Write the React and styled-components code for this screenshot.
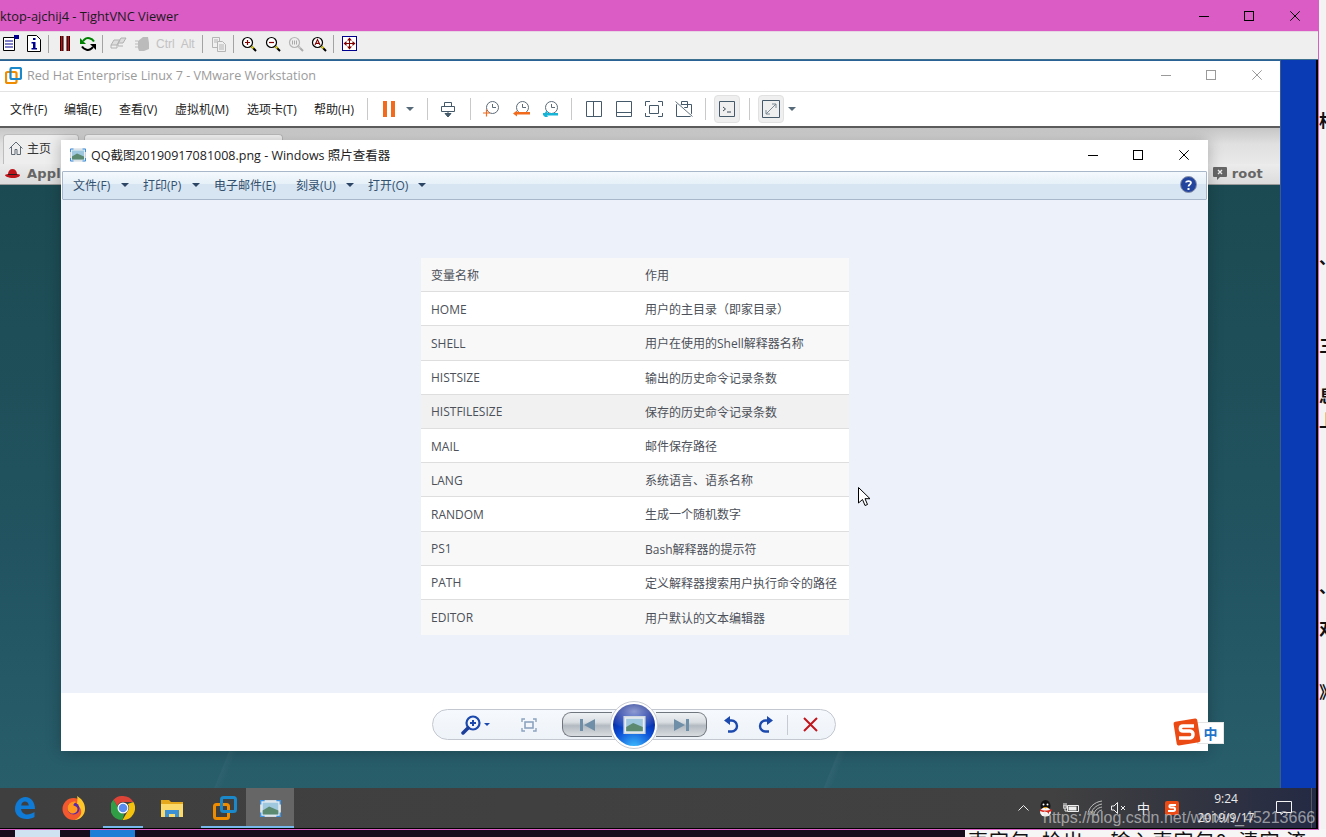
import React from 'react';
import styled, { createGlobalStyle, css } from 'styled-components';

const Global = createGlobalStyle`
  html, body { margin: 0; padding: 0; background: #fff; }
  body { font-family: "Open Sans", "Noto Sans CJK SC", sans-serif; }
  * { box-sizing: border-box; }
`;

const UI = `"Open Sans", "Noto Sans CJK SC", sans-serif`;

const Stage = styled.div`
  position: relative;
  width: 1326px;
  height: 837px;
  overflow: hidden;
  background: #f3f3f3;
`;

const Ico = styled.svg`
  display: block;
  flex-shrink: 0;
  margin-left: ${p => p.$ml || 0}px;
`;

/* ---------- page behind the VNC window ---------- */
const BottomStrip = styled.div`
  position: absolute;
  left: 0;
  right: 0;
  top: 829px;
  height: 8px;
  display: flex;
  background: #170c1c;
  overflow: hidden;
`;
const StripIcon = styled.div`
  width: 45px;
  height: 8px;
  margin-left: ${p => p.$ml}px;
  background: ${p => p.$c};
  flex-shrink: 0;
`;
const DocLine = styled.div`
  margin-left: auto;
  width: 361px;
  height: 8px;
  padding-left: 3px;
  background: #f6f6f6;
  color: #111;
  font: 20px/24px "Noto Sans CJK SC", serif;
  letter-spacing: 1px;
  white-space: pre;
  overflow: hidden;
`;
const DocGlyph = styled.span`
  position: absolute;
  left: 1319px;
  top: ${p => p.$y}px;
  color: #111;
  font: 700 17px/20px "Noto Sans CJK SC", serif;
`;

/* ---------- VNC window ---------- */
const VncWindow = styled.div`
  position: absolute;
  left: 0;
  top: 0;
  width: 1319px;
  height: 830px;
  display: flex;
  flex-direction: column;
  border-right: 1px solid #d95dc4;
  border-bottom: 1px solid #d95dc4;
`;
const VncTitle = styled.header`
  height: 32px;
  flex-shrink: 0;
  display: flex;
  align-items: center;
  background: #db5cc5;
  border-bottom: 1px solid #e6d5e2;
  padding-right: 18px;
  color: #1a1a1a;
  font: 12.8px "Open Sans", sans-serif;
  white-space: nowrap;
`;
const VncToolbar = styled.div`
  height: 28px;
  flex-shrink: 0;
  display: flex;
  align-items: center;
  background: #efefef;
  border-bottom: 1px solid #3d6f8e;
  padding: 0 0 4px 2px;
`;
const VSep = styled.span`
  flex-shrink: 0;
  width: 1px;
  height: ${p => p.$h || 18}px;
  margin-left: ${p => p.$ml || 0}px;
  background: ${p => p.$c || '#a3a3a3'};
`;
const KeyLabel = styled.span`
  flex-shrink: 0;
  margin-left: ${p => p.$ml}px;
  color: #c2c2c2;
  font: 12px "Liberation Sans", sans-serif;
`;
const Controls = styled.div`
  margin-left: auto;
  display: flex;
  align-items: center;
`;
const RemoteRow = styled.div`
  flex: 1;
  min-height: 0;
  display: flex;
`;
const BlueStrip = styled.div`
  flex: 1;
  background: #0a3ab4;
  border-left: 1px solid #3d5a8f;
  border-right: 2px solid #000;
`;

/* ---------- VMware window ---------- */
const VmwareWindow = styled.div`
  width: 1280px;
  flex-shrink: 0;
  display: flex;
  flex-direction: column;
  background: #fff;
`;
const VmTitle = styled.div`
  height: 32px;
  flex-shrink: 0;
  display: flex;
  align-items: center;
  padding: 0 18px 2px 5px;
  border-top: 1px solid #2b6295;
  border-bottom: 1px solid #e3e3e3;
  color: #9b9b9b;
  font: 12.6px "Open Sans", sans-serif;
`;
const VmName = styled.span`
  margin-left: 5px;
`;
const VmMenuBar = styled.div`
  height: 36px;
  flex-shrink: 0;
  display: flex;
  align-items: center;
  background: #fff;
  border-bottom: 2px solid #5c5c5c;
`;
const VmMenuItem = styled.span`
  flex-shrink: 0;
  width: ${p => p.$w}px;
  margin-left: ${p => p.$ml || 0}px;
  color: #222;
  font: 12px ${UI};
  white-space: nowrap;
`;
const ToggleBox = styled.span`
  flex-shrink: 0;
  margin-left: ${p => p.$ml}px;
  width: ${p => p.$w}px;
  height: 28px;
  display: flex;
  align-items: center;
  justify-content: center;
  background: #efefef;
  border: 1px solid #e1e1e1;
  border-radius: 4px;
`;
const TabZone = styled.div`
  height: 36px;
  flex-shrink: 0;
  display: flex;
  align-items: flex-end;
  padding-left: 3px;
  gap: 5px;
  background: linear-gradient(#c6c6c6, #e0e0e0 45%, #e9e9e9);
`;
const Tab = styled.div`
  width: ${p => p.$w}px;
  height: 30px;
  display: flex;
  align-items: center;
  gap: 4px;
  padding: 0 0 3px 5px;
  background: ${p => (p.$light ? '#f7f7f7' : '#eeeeee')};
  border: 1px solid #bdbdbd;
  border-bottom: 0;
  border-radius: 4px 4px 0 0;
  color: #333;
  font: 12px ${UI};
`;
const GnomePanel = styled.div`
  height: 21px;
  flex-shrink: 0;
  display: flex;
  align-items: center;
  padding: 0 17px 2px 5px;
  background: linear-gradient(#ececec, #dcdcdc);
  border-bottom: 1px solid #9a9a9a;
  color: #666;
  font: 700 13px "DejaVu Sans", sans-serif;
  letter-spacing: 0.2px;
`;
const PanelLabel = styled.span`
  margin-left: ${p => p.$ml}px;
`;
const PanelRight = styled.div`
  margin-left: auto;
  display: flex;
  align-items: center;
  gap: 5px;
`;
const Desktop = styled.div`
  flex: 1;
  background:
    linear-gradient(112deg, transparent 70%, rgba(255,255,255,.04) 70.1%, transparent 70.6%),
    linear-gradient(112deg, transparent 30%, rgba(255,255,255,.03) 30.1%, transparent 30.6%),
    linear-gradient(#1c4a52, #215460 60%, #285d6a);
`;

/* ---------- Taskbar ---------- */
const Taskbar = styled.footer`
  height: 41px;
  flex-shrink: 0;
  display: flex;
  align-items: stretch;
  background: linear-gradient(90deg, #3f3f3f 0, #414141 80%, #333540 90%, #242a44 100%);
  border-bottom: 1px solid #000;
  border-right: 2px solid #000;
`;
const TaskCell = styled.div`
  width: ${p => p.$w}px;
  margin-left: ${p => p.$ml || 0}px;
  flex-shrink: 0;
  display: flex;
  align-items: center;
  justify-content: center;
  background: ${p => (p.$active ? '#666666' : 'transparent')};
  ${p => p.$line && css`box-shadow: inset 0 -2px 0 #76b9ed;`}
`;
const TrayArea = styled.div`
  margin-left: auto;
  display: flex;
  align-items: center;
  color: #f0f0f0;
`;
const TrayText = styled.span`
  flex-shrink: 0;
  margin-left: ${p => p.$ml}px;
  color: #f4f4f4;
  font: 13px/16px "Noto Sans CJK SC", sans-serif;
`;
const Clock = styled.div`
  margin-left: 10px;
  width: 74px;
  text-align: center;
  font: 12px/19px "Open Sans", sans-serif;
  color: #eaeaea;
`;
const ShowDesk = styled.span`
  width: 1px;
  height: 40px;
  margin-left: 19px;
  margin-right: 4px;
  background: #565860;
`;
const Watermark = styled.div`
  position: absolute;
  left: 1043px;
  top: 808px;
  color: rgba(225, 225, 225, .62);
  font: 16px/20px "Liberation Sans", sans-serif;
  white-space: nowrap;
`;

/* ---------- Photo viewer ---------- */
const PhotoWindow = styled.section`
  position: absolute;
  left: 61px;
  top: 140px;
  width: 1147px;
  height: 611px;
  display: flex;
  flex-direction: column;
  background: #fff;
  box-shadow: 0 0 14px rgba(0, 0, 0, .25);
`;
const PhotoTitle = styled.div`
  height: 31px;
  flex-shrink: 0;
  display: flex;
  align-items: center;
  padding: 0 19px 2px 9px;
  color: #222;
  font: 12.5px ${UI};
  white-space: nowrap;
`;
const PhotoName = styled.span`
  margin-left: 5px;
`;
const PhotoMenu = styled.nav`
  height: 29px;
  margin: 0 1px;
  flex-shrink: 0;
  display: flex;
  align-items: center;
  padding-bottom: 2px;
  border: 1px solid #a9b7ca;
  border-radius: 1px;
  background: linear-gradient(#f4f9fd 0, #e6f0f8 45%, #d7e5f2 46%, #d7e5f2 100%);
`;
const PhotoMenuItem = styled.span`
  flex-shrink: 0;
  margin-left: ${p => p.$ml}px;
  width: ${p => p.$w}px;
  color: #33506f;
  font: 12px ${UI};
  white-space: nowrap;
`;
const Caret = styled.span`
  flex-shrink: 0;
  width: 0;
  height: 0;
  margin-left: ${p => p.$ml || 0}px;
  border-left: ${p => p.$s || 4}px solid transparent;
  border-right: ${p => p.$s || 4}px solid transparent;
  border-top: ${p => p.$s || 4}px solid ${p => p.$c || '#2c4565'};
`;
const HelpWrap = styled.span`
  margin-right: 9px;
`;
const PhotoBody = styled.div`
  flex: 1;
  min-height: 0;
  background: #edf2fa;
  padding: 58px 0 0 360px;
`;
const Table = styled.div`
  width: 428px;
  color: #4c5058;
  font: 12px ${UI};
`;
const Row = styled.div`
  display: grid;
  grid-template-columns: 214px 1fr;
  align-items: center;
  height: ${p => (p.$last ? 35 : 34.2)}px;
  padding: 1px 0 0 10px;
  background: ${p => p.$bg};
  border-bottom: ${p => (p.$last ? 0 : '1px solid #dedede')};
`;
const PhotoFooter = styled.div`
  height: 58px;
  flex-shrink: 0;
  background: #fff;
  padding: 16px 0 0 371px;
`;
const Pill = styled.div`
  width: 404px;
  height: 31px;
  display: flex;
  align-items: center;
  border: 1px solid #c3c8d0;
  border-radius: 16px;
  background: linear-gradient(#f6f9fd, #eef3f9);
`;
const NavHalf = styled.div`
  flex-shrink: 0;
  margin-left: ${p => p.$ml || 0}px;
  width: ${p => p.$w}px;
  height: 25px;
  display: flex;
  align-items: center;
  justify-content: center;
  background: linear-gradient(#eef1f4 0, #d9dee2 40%, #b3bac1 55%, #d8dce0 100%);
  border: 1px solid #70767d;
  border-radius: ${p => (p.$left ? '9px 0 0 9px' : '0 9px 9px 0')};
  ${p => (p.$left ? 'border-right: 0;' : 'border-left: 0;')}
`;
const Orb = styled.div`
  flex-shrink: 0;
  width: 48px;
  height: 48px;
  margin: 0 -2px;
  position: relative;
  z-index: 1;
  display: flex;
  align-items: center;
  justify-content: center;
  border-radius: 50%;
  border: 1px solid #c8ccd2;
  padding: 2px;
  background: #fff;
`;
const OrbCore = styled.div`
  width: 100%;
  height: 100%;
  display: flex;
  align-items: center;
  justify-content: center;
  border-radius: 50%;
  background:
    radial-gradient(ellipse 70% 42% at 50% 18%, rgba(255,255,255,.55), rgba(255,255,255,.08) 90%, transparent 100%),
    radial-gradient(circle at 50% 105%, #3fc0ff 0, #0b4fd6 42%, #05229c 72%, #0a1f7c 100%);
`;
const Ime = styled.div`
  position: absolute;
  left: 1173px;
  top: 718px;
  width: 51px;
  height: 28px;
  display: flex;
  align-items: center;
`;
const ImeLogo = styled(Ico)`
  position: relative;
  z-index: 1;
`;
const ImeTag = styled.span`
  position: absolute;
  left: 24px;
  top: 4px;
  width: 27px;
  height: 22px;
  display: flex;
  align-items: center;
  justify-content: center;
  background: #fff;
  border: 1px solid #e5e5e5;
  color: #1f74c9;
  font: 700 14px "Noto Sans CJK SC", sans-serif;
`;
const Cursor = styled.svg`
  position: absolute;
  left: 858px;
  top: 487px;
`;
const ThumbSvg = styled.svg`
  display: block;
`;

const rows = [
  ['HOME', '用户的主目录（即家目录）', '#fff'],
  ['SHELL', '用户在使用的Shell解释器名称', '#f8f8f8'],
  ['HISTSIZE', '输出的历史命令记录条数', '#fff'],
  ['HISTFILESIZE', '保存的历史命令记录条数', '#f1f1f1'],
  ['MAIL', '邮件保存路径', '#fff'],
  ['LANG', '系统语言、语系名称', '#f8f8f8'],
  ['RANDOM', '生成一个随机数字', '#fff'],
  ['PS1', 'Bash解释器的提示符', '#f8f8f8'],
  ['PATH', '定义解释器搜索用户执行命令的路径', '#fff'],
  ['EDITOR', '用户默认的文本编辑器', '#f8f8f8'],
];

/* ---------- drawn icons ---------- */
const Min = ({ c, ml }) => (
  <Ico $ml={ml} width="10" height="10" viewBox="0 0 10 10"><path d="M0 5.500H10" stroke={c} /></Ico>
);
const Max = ({ c, ml }) => (
  <Ico $ml={ml} width="10" height="10" viewBox="0 0 10 10"><rect x=".5" y=".5" width="9" height="9" fill="none" stroke={c} /></Ico>
);
const Close = ({ c, ml }) => (
  <Ico $ml={ml} width="10" height="10" viewBox="0 0 10 10"><path d="M.3.3 9.700 9.700M9.700.3.3 9.700" stroke={c} /></Ico>
);
const WinControls = ({ c, g1, g2 }) => (
  <Controls><Min c={c} /><Max c={c} ml={g1} /><Close c={c} ml={g2} /></Controls>
);

const Lens = ({ ml, dim, glyph }) => {
  const c = dim ? '#b5b5b5' : '#000';
  const g = dim ? '#aaa' : '#800000';
  return (
    <Ico $ml={ml} width="16" height="16" viewBox="0 0 16 16">
      <circle cx="6.500" cy="6.500" r="5" fill={dim ? '#eee' : '#fff'} stroke={c} strokeWidth="1.200" />
      <path d="M10 10l5 5" stroke={dim ? '#aaa' : '#000'} strokeWidth="2" />
      <path d="M10.400 10.400l2 2" stroke={dim ? '#ccc' : '#f3e312'} strokeWidth="1.600" />
      {glyph === 'plus' && <path d="M4 6.500H9M6.500 4V9" stroke={g} strokeWidth="1.200" />}
      {glyph === 'minus' && <path d="M4 6.500H9" stroke={g} strokeWidth="1.200" />}
      {glyph === 'fit' && <path d="M4.500 4.500v4M6.500 4.500v4M8.500 4.500v4" stroke={g} strokeWidth="1" />}
      {glyph === 'auto' && <path d="M4 9 6.500 3.500 9 9M5 7.400H8" fill="none" stroke={g} strokeWidth="1.100" />}
    </Ico>
  );
};

const ClockBase = ({ children, ml }) => (
  <Ico $ml={ml} width="17" height="16" viewBox="0 0 17 16">
    <circle cx="9.500" cy="6.500" r="6" fill="none" stroke="#5b6b78" />
    <path d="M9.500 3v3.500H13" fill="none" stroke="#5b6b78" />
    {children}
  </Ico>
);

const Panel = ({ ml, children, w = 16 }) => (
  <Ico $ml={ml} width={w} height="16" viewBox={`0 0 ${w} 16`} fill="none" stroke="#44596a">{children}</Ico>
);

const VmLogo = ({ s = 17 }) => (
  <Ico width={s} height={s} viewBox="0 0 17 17" fill="none">
    <rect x="1" y="5" width="10.500" height="11" rx="1.500" stroke="#f08c00" strokeWidth="2.200" />
    <rect x="5.500" y="1" width="10.500" height="11" rx="1.500" stroke="#1a88c9" strokeWidth="2.200" />
  </Ico>
);

const PhotoThumb = ({ w = 16, h = 13, corners }) => (
  <ThumbSvg width={w} height={h} viewBox="0 0 16 13">
    <rect x=".5" y=".5" width="15" height="12" fill="#e8eef2" stroke="#cfd8de" />
    <rect x="2" y="2" width="12" height="9" fill="#9fc7de" />
    <path d="M2 8 7 5l7 3v3H2z" fill="#5b8a70" />
    {corners && <path d="M.5 3.500v-3h3M12.500.5h3v3M15.500 9.500v3h-3M3.500 12.500h-3v-3" fill="none" stroke="#3c90e0" />}
  </ThumbSvg>
);

export default function App() {
  return (
    <Stage>
      <Global />
      <BottomStrip>
        <StripIcon $ml={15} $c="#cfe2f2" />
        <StripIcon $ml={30} $c="#1f7fd6" />
        <DocLine>{'声字包  检出。 输入声字包0  清空 流'}</DocLine>
      </BottomStrip>
      <DocGlyph $y={110}>相</DocGlyph>
      <DocGlyph $y={247}>、</DocGlyph>
      <DocGlyph $y={335}>三</DocGlyph>
      <DocGlyph $y={385}>息</DocGlyph>
      <DocGlyph $y={410}>上</DocGlyph>
      <DocGlyph $y={576}>、</DocGlyph>
      <DocGlyph $y={618}>对</DocGlyph>
      <DocGlyph $y={682}>》</DocGlyph>

      <VncWindow>
        <VncTitle>
          ktop-ajchij4 - TightVNC Viewer
          <WinControls c="#000" g1={35} g2={36} />
        </VncTitle>
        <VncToolbar>
          <Ico width="17" height="17" viewBox="0 0 17 17">
            <path d="M1.500 2.500h11v13h-11z" fill="#fff" stroke="#000" />
            <path d="M3 6h8M3 9h8M3 12h8" stroke="#000090" />
            <rect x="12" y="0" width="5" height="4" fill="#000090" />
          </Ico>
          <Ico $ml={7} width="16" height="17" viewBox="0 0 16 17">
            <path d="M1.500.5h9l4 4v12h-13z" fill="#fff" stroke="#000" />
            <path d="M7 3h2.500v2H7zM5.500 7h4v6h1.500v1.500H5.500V13H7V8.500H5.500z" fill="#000090" />
          </Ico>
          <VSep $ml={6} />
          <Ico $ml={11} width="10" height="15" viewBox="0 0 10 15">
            <path d="M0 0h3.500v15H0zM6.500 0H10v15H6.500z" fill="#000" />
            <path d="M1 0h1.500v15H1zM7.500 0H9v15H7.500z" fill="#e00000" />
          </Ico>
          <Ico $ml={10} width="16" height="16" viewBox="0 0 16 16" fill="none">
            <path d="M14 5.500C12 2 7 1 4.500 3.500L3 5" stroke="#008000" strokeWidth="2" />
            <path d="M0 2v6h6z" fill="#008000" />
            <path d="M2 10.500C4 14 9 15 11.500 12.500L13 11" stroke="#000" strokeWidth="2" />
            <path d="M16 14V8h-6z" fill="#000" />
          </Ico>
          <VSep $ml={6} />
          <Ico $ml={7} width="17" height="13" viewBox="0 0 17 13" fill="#ddd" stroke="#b0b0b0">
            <path d="M1 8 4 3h6L7 8zM8 6l3-5h5l-3 5z" />
            <path d="M1 8v3h6V8M8 6v3h5" fill="none" />
          </Ico>
          <Ico $ml={8} width="15" height="16" viewBox="0 0 15 16" fill="#bbb">
            <path d="M3 5 8 1h5l1 6v6l-5 2H4l-1-3z" />
            <path d="M0 5h3M0 8h3M0 11h3" stroke="#bbb" strokeWidth="1.200" />
          </Ico>
          <KeyLabel $ml={6}>Ctrl</KeyLabel>
          <KeyLabel $ml={6}>Alt</KeyLabel>
          <VSep $ml={7} />
          <Ico $ml={8} width="16" height="16" viewBox="0 0 16 16" fill="#f0f0f0" stroke="#b5b5b5">
            <path d="M1.500 1.500h7v10h-7z" />
            <path d="M6.500 5.500h5l3 3v7h-8z" />
            <path d="M3 4h4M3 6h3M8 9h5M8 11h5M8 13h5" fill="none" />
          </Ico>
          <VSep $ml={6} />
          <Lens ml={7} glyph="plus" />
          <Lens ml={8} glyph="minus" />
          <Lens ml={7} dim glyph="fit" />
          <Lens ml={7} glyph="auto" />
          <VSep $ml={6} />
          <Ico $ml={8} width="15" height="15" viewBox="0 0 15 15">
            <rect x=".5" y=".5" width="14" height="14" fill="#fff" stroke="#000090" />
            <path d="M7.500 1.500 10 4.500H5zM7.500 13.500 10 10.500H5zM1.500 7.500l3-2.500v5zM13.500 7.500l-3-2.500v5z" fill="#800000" />
            <path d="M7.500 4v7M4 7.500h7" stroke="#800000" />
          </Ico>
        </VncToolbar>

        <RemoteRow>
          <VmwareWindow>
            <VmTitle>
              <VmLogo />
              <VmName>Red Hat Enterprise Linux 7 - VMware Workstation</VmName>
              <WinControls c="#9a9a9a" g1={35} g2={36} />
            </VmTitle>
            <VmMenuBar>
              <VmMenuItem $ml={10} $w={54}>文件(F)</VmMenuItem>
              <VmMenuItem $w={55}>编辑(E)</VmMenuItem>
              <VmMenuItem $w={56}>查看(V)</VmMenuItem>
              <VmMenuItem $w={72}>虚拟机(M)</VmMenuItem>
              <VmMenuItem $w={67}>选项卡(T)</VmMenuItem>
              <VmMenuItem $w={53}>帮助(H)</VmMenuItem>
              <VSep $h={22} $c="#c9c9c9" />
              <Ico $ml={15} width="12" height="16" viewBox="0 0 12 16"><path d="M0 0h4v16H0zM8 0h4v16H8z" fill="#f26a1b" /></Ico>
              <Caret $ml={11} $c="#566a7a" />
              <VSep $ml={13} $h={22} $c="#c9c9c9" />
              <Panel ml={12}>
                <path d="M4.500 1.500h7v4h-7zM1.500 5.500h13v5h-13z" />
                <path d="M8 10v5" /><path d="M5 12.500h6L8 16z" fill="#44596a" />
              </Panel>
              <VSep $ml={14} $h={22} $c="#c9c9c9" />
              <ClockBase ml={12}><path d="M0 12h7M3.500 8.500v7" stroke="#f26a1b" strokeWidth="1.200" /></ClockBase>
              <ClockBase ml={13}><path d="M1 11h16v2.500H4v2L0 12.500 4 9.500v1.500z" fill="#f26a1b" /></ClockBase>
              <ClockBase ml={12}><path d="M1 12h2c.500-2 2-2 3-2l-1 2h11v2.500H5l1 1.500H3l-2-2z" fill="#16b4d6" /></ClockBase>
              <VSep $ml={12} $h={22} $c="#c9c9c9" />
              <Panel ml={14}><path d="M.5.500h15v15H.5zM7.500.500v15" /></Panel>
              <Panel ml={14}><path d="M.5.500h15v15H.5zM.5 11.500h15" /></Panel>
              <Panel ml={13} w={18}>
                <path d="M.5 5V.5H5M13 .5h4.500V5M17.500 12v3.500H13M5 15.500H.5V12" />
                <path d="M4.500 4.500h9v8h-9z" />
              </Panel>
              <Panel ml={12} w={18}>
                <path d="M1.500 3.500h15v12h-15zM6.500 .5h6v6h-6z" />
                <path d="M.5.500l17 15" stroke="#fff" strokeWidth="2.500" />
                <path d="M.5.500l17 15" stroke="#66757f" />
              </Panel>
              <VSep $ml={12} $h={22} $c="#c9c9c9" />
              <ToggleBox $ml={8} $w={26}>
                <Panel>
                  <path d="M.5.500h15v15H.5z" />
                  <path d="M4 6l2.500 2L4 10M8 11h4" stroke="#3b4b58" />
                </Panel>
              </ToggleBox>
              <VSep $ml={9} $h={22} $c="#c9c9c9" />
              <ToggleBox $ml={8} $w={26}>
                <Ico width="18" height="18" viewBox="0 0 18 18" fill="none" stroke="#44596a">
                  <path d="M.5.500h17v17H.5z" />
                  <path d="M4 14 14 4M10 4h4v4M4 10v4h4" stroke="#7b8a95" />
                </Ico>
              </ToggleBox>
              <Caret $ml={4} $c="#566a7a" />
            </VmMenuBar>
            <TabZone>
              <Tab $w={76}>
                <Ico width="14" height="14" viewBox="0 0 14 14" fill="none" stroke="#5e6b75">
                  <path d="M.5 7.500 7 1l6.500 6.500M2.500 5.500v8h3.500v-5h2v5h3.500v-8" />
                </Ico>
                主页
              </Tab>
              <Tab $w={199} $light />
            </TabZone>
            <GnomePanel>
              <Ico width="15" height="11" viewBox="0 0 15 11">
                <path d="M3 6c0-3 2-5 4.500-5S12 3 12 6z" fill="#c0141b" />
                <path d="M0 7c1-1 3-1 3-1h9s3 0 3 1-2 3-7 3-8-2-8-3z" fill="#c0141b" />
                <path d="M3 6h9v1H3z" fill="#222" />
              </Ico>
              <PanelLabel $ml={7}>Applications</PanelLabel>
              <PanelRight>
                <Ico width="14" height="13" viewBox="0 0 14 13">
                  <path d="M1 0h12a1 1 0 011 1v8a1 1 0 01-1 1H7l-3 3v-3H1a1 1 0 01-1-1V1a1 1 0 011-1z" fill="#666" />
                  <path d="M5 3l4 4M9 3 5 7" stroke="#eee" strokeWidth="1.400" />
                </Ico>
                root
              </PanelRight>
            </GnomePanel>
            <Desktop />
          </VmwareWindow>
          <BlueStrip />
        </RemoteRow>

        <Taskbar>
          <TaskCell $w={49}>
            <Ico width="20" height="22" viewBox="0 0 20 22">
              <path fillRule="evenodd" fill="#0f7bd6" d="M0 12C0 5 5 0 10.500 0 16 0 20 5 20 12H6c.3 3 3 5.500 6 5.500 3 0 5-1 7.500-2.500v5C17 21.500 14 22 11.500 22 5 22 0 18 0 12zM6.200 8.500h7.600C13.500 6 12 4.500 10 4.500S6.500 6 6.200 8.500z" />
            </Ico>
          </TaskCell>
          <TaskCell $w={49}>
            <Ico width="23" height="24" viewBox="0 0 23 24">
              <circle cx="11.500" cy="13" r="11" fill="#f3582e" />
              <path d="M15 0c5 3 8 7 8 13a11 11 0 01-11 11c6-2 8-6 7-10-.5-2-2-4-4-5 0-3 1-6 0-9z" fill="#ffc629" />
              <circle cx="11.500" cy="12.500" r="6" fill="#5a2aa8" />
              <path d="M7 8c2-2 5-3 7-2-1 1-3 2-2.500 3.500 2 .8 4 1.500 4 3.500 0 3-2.500 4.500-5 4.500s-5-2.500-5-5c0-1.500.5-3.500 1.500-4.500z" fill="#ff9a1f" />
            </Ico>
          </TaskCell>
          <TaskCell $w={40} $ml={5} $line>
            <Ico width="24" height="24" viewBox="0 0 24 24">
              <path d="M12 0a12 12 0 0110.400 6H12a6 6 0 00-5.700 4.200L2.500 3.800A12 12 0 0112 0z" fill="#db4437" />
              <path d="M22.400 6A12 12 0 0111.500 24l5-8.500A6 6 0 0016.700 8z" fill="#f4c20d" />
              <path d="M2.500 3.800l4.800 8.300a6 6 0 006 5.700L11.500 24A12 12 0 012.500 3.800z" fill="#2f9e44" />
              <circle cx="12" cy="12" r="5.500" fill="#fff" />
              <circle cx="12" cy="12" r="4.300" fill="#5a8cf0" />
            </Ico>
          </TaskCell>
          <TaskCell $w={48} $ml={5}>
            <Ico width="22" height="18" viewBox="0 0 22 18">
              <path d="M0 1h8l2 2h12v15H0z" fill="#e5a81c" />
              <path d="M0 5h22v13H0z" fill="#fbd96b" />
              <path d="M4 18v-7h14v7h-4v-3H8v3z" fill="#3c90d6" />
            </Ico>
          </TaskCell>
          <TaskCell $w={48} $ml={5} $line>
            <Ico width="24" height="24" viewBox="0 0 24 24" fill="none">
              <rect x="1.500" y="8.500" width="14" height="14" rx="2" stroke="#f08c00" strokeWidth="3" />
              <rect x="8.500" y="1.500" width="14" height="14" rx="2" stroke="#1a88c9" strokeWidth="3" />
            </Ico>
          </TaskCell>
          <TaskCell $w={48} $ml={-3} $active $line>
            <PhotoThumb w={21} h={17} corners />
          </TaskCell>

          <TrayArea>
            <Ico width="11" height="6" viewBox="0 0 11 6"><path d="M.5 5.500l5-5 5 5" fill="none" stroke="#eee" /></Ico>
            <Ico $ml={9} width="15" height="17" viewBox="0 0 15 17">
              <ellipse cx="7.500" cy="6" rx="5" ry="6" fill="#111" />
              <ellipse cx="7.500" cy="12" rx="5.500" ry="4.500" fill="#f6f6f6" />
              <path d="M2 9c3 2 8 2 11 0l1 2-3 1v2l-2-2H5l-3-1z" fill="#d9251c" />
              <circle cx="5.500" cy="4.500" r="1" fill="#fff" /><circle cx="9.500" cy="4.500" r="1" fill="#fff" />
              <path d="M5 7h5L7.500 8.500z" fill="#f5a300" />
            </Ico>
            <Ico $ml={10} width="16" height="12" viewBox="0 0 16 12" fill="none" stroke="#eee">
              <path d="M4.500 3.500h11v6h-11z" /><rect x="5.500" y="4.500" width="8" height="4" fill="#eee" stroke="none" />
              <path d="M1 1v3M3 1v3M0 4h4v2H0zM2 6v3h2" />
            </Ico>
            <Ico $ml={8} width="17" height="16" viewBox="0 0 17 16" fill="none" stroke="#bdbdbd">
              <path d="M1 15C1 8 7 2 15 1M4 15c0-5 5-10 11-11M7 15c0-4 3-7 8-8M10 15c0-2 2-5 5-5" />
            </Ico>
            <Ico $ml={7} width="15" height="12" viewBox="0 0 15 12" fill="none" stroke="#eee">
              <path d="M.5 4v4h2.500L6.500 11.500V.5L3 4z" />
              <path d="M10 4l4 4M14 4l-4 4" />
            </Ico>
            <TrayText $ml={11}>中</TrayText>
            <Ico $ml={15} width="14" height="14" viewBox="0 0 14 14">
              <rect width="14" height="14" rx="2" fill="#ec4a14" />
              <path d="M11 4H5.500C4 4 4 6.500 5.500 6.500h3c2 0 2 3.500 0 3.500H3" fill="none" stroke="#fff" strokeWidth="2" />
            </Ico>
            <Clock>9:24<br />2019/9/17</Clock>
            <Ico $ml={13} width="16" height="14" viewBox="0 0 16 14"><path d="M.5.500h15v11H7.500L5 13.500V11.500H.5z" fill="none" stroke="#f4f4f4" /></Ico>
            <ShowDesk />
          </TrayArea>
        </Taskbar>
      </VncWindow>

      <PhotoWindow>
        <PhotoTitle>
          <PhotoThumb w={16} h={14} corners />
          <PhotoName>QQ截图20190917081008.png - Windows 照片查看器</PhotoName>
          <WinControls c="#000" g1={35} g2={36} />
        </PhotoTitle>
        <PhotoMenu>
          <PhotoMenuItem $ml={10} $w={48}>文件(F)</PhotoMenuItem>
          <Caret />
          <PhotoMenuItem $ml={14} $w={49}>打印(P)</PhotoMenuItem>
          <Caret />
          <PhotoMenuItem $ml={14} $w={82}>电子邮件(E)</PhotoMenuItem>
          <PhotoMenuItem $ml={0} $w={50}>刻录(U)</PhotoMenuItem>
          <Caret />
          <PhotoMenuItem $ml={14} $w={50}>打开(O)</PhotoMenuItem>
          <Caret />
          <Controls>
            <HelpWrap>
              <Ico width="17" height="17" viewBox="0 0 17 17">
                <circle cx="8.500" cy="8.500" r="8" fill="#24459e" stroke="#8b93a8" />
                <path d="M6 6.500C6 4.500 11 4.500 11 6.800 11 8.500 8.500 8.500 8.500 10.500" fill="none" stroke="#fff" strokeWidth="1.700" />
                <path d="M7.500 12h2v2h-2z" fill="#fff" />
              </Ico>
            </HelpWrap>
          </Controls>
        </PhotoMenu>
        <PhotoBody>
          <Table>
            <Row $bg="#f8f8f8"><span>变量名称</span><span>作用</span></Row>
            {rows.map((r, i) => (
              <Row key={r[0]} $bg={r[2]} $last={i === rows.length - 1}>
                <span>{r[0]}</span><span>{r[1]}</span>
              </Row>
            ))}
          </Table>
        </PhotoBody>
        <PhotoFooter>
          <Pill>
            <Ico $ml={28} width="20" height="20" viewBox="0 0 20 20" fill="none">
              <circle cx="12" cy="8" r="6.500" stroke="#1c49ad" strokeWidth="2.200" fill="#f3f7fc" />
              <path d="M7 13 2 18" stroke="#1c3f9a" strokeWidth="3.500" strokeLinecap="round" />
              <path d="M9 8h6M12 5v6" stroke="#1c49ad" strokeWidth="2" />
            </Ico>
            <Caret $ml={3} $c="#1c49ad" $s={3.500} />
            <Ico $ml={31} width="16" height="14" viewBox="0 0 16 14" fill="none" stroke="#8ca3c0" strokeWidth="1.400">
              <path d="M1 4V1h3M12 1h3v3M15 10v3h-3M4 13H1v-3" />
              <rect x="4" y="4" width="8" height="6" strokeWidth="1.600" />
            </Ico>
            <NavHalf $ml={25} $w={50} $left>
              <Ico width="15" height="12" viewBox="0 0 15 12"><path d="M0 0h3v12H0zM15 0v12L4 6z" fill="#6f8fa8" /></Ico>
            </NavHalf>
            <Orb>
              <OrbCore><PhotoThumb w={23} h={18} /></OrbCore>
            </Orb>
            <NavHalf $w={51}>
              <Ico width="15" height="12" viewBox="0 0 15 12"><path d="M15 0h-3v12h3zM0 0v12l11-6z" fill="#6f8fa8" /></Ico>
            </NavHalf>
            <Ico $ml={17} width="15" height="17" viewBox="0 0 15 17" fill="none">
              <path d="M4 5.500h3.500a5.500 5.500 0 110 11H4" stroke="#1c49ad" strokeWidth="2.400" transform="translate(0 -1)" />
              <path d="M6 0v9L0 4.500z" fill="#1c49ad" />
            </Ico>
            <Ico $ml={19} width="15" height="17" viewBox="0 0 15 17" fill="none">
              <path d="M11 5.500H7.500a5.500 5.500 0 100 11H11" stroke="#1c49ad" strokeWidth="2.400" transform="translate(0 -1)" />
              <path d="M9 0v9l6-4.500z" fill="#1c49ad" />
            </Ico>
            <VSep $ml={14} $h={20} $c="#c6cbd2" />
            <Ico $ml={15} width="15" height="15" viewBox="0 0 15 15"><path d="M1 1l13 13M14 1 1 14" stroke="#c2161d" strokeWidth="2" /></Ico>
          </Pill>
        </PhotoFooter>
      </PhotoWindow>

      <Ime>
        <ImeTag>中</ImeTag>
        <ImeLogo width="28" height="28" viewBox="0 0 28 28">
          <rect x="2" y="2" width="24" height="24" rx="2" fill="#ec4a14" transform="rotate(-9 14 14)" />
          <path d="M21 8H10C6.500 8 6.500 13 10 13h7c4 0 4 7 0 7H6" fill="none" stroke="#fff" strokeWidth="3.500" />
        </ImeLogo>
      </Ime>

      <Watermark>https://blog.csdn.net/weixin_45213666</Watermark>

      <Cursor width="13" height="19" viewBox="0 0 13 19">
        <path d="M.5.500v15.500l4-3.500 2.500 6 2.500-1-2.500-5.800H12z" fill="#fff" stroke="#000" />
      </Cursor>
    </Stage>
  );
}
